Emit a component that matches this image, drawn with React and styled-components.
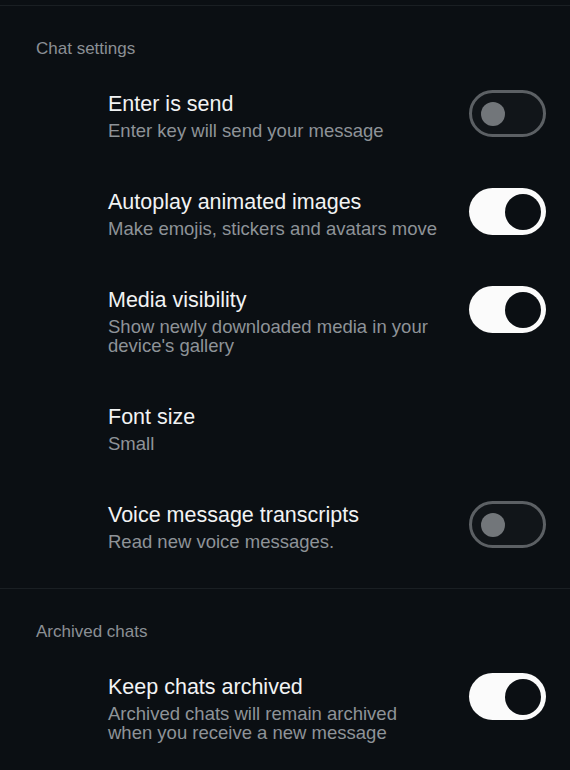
import React from "react";
import styled, { createGlobalStyle } from "styled-components";

const GlobalStyle = createGlobalStyle`
  html, body {
    margin: 0;
    padding: 0;
    background: #0b0f13;
  }
  body {
    font-family: "Liberation Sans", Arial, sans-serif;
    -webkit-font-smoothing: antialiased;
  }
`;

const sections = [
  {
    title: "Chat settings",
    items: [
      { title: "Enter is send", sub: ["Enter key will send your message"], toggle: false },
      { title: "Autoplay animated images", sub: ["Make emojis, stickers and avatars move"], toggle: true },
      {
        title: "Media visibility",
        sub: ["Show newly downloaded media in your", "device's gallery"],
        toggle: true
      },
      { title: "Font size", sub: ["Small"] },
      { title: "Voice message transcripts", sub: ["Read new voice messages."], toggle: false }
    ]
  },
  {
    title: "Archived chats",
    items: [
      {
        title: "Keep chats archived",
        sub: ["Archived chats will remain archived", "when you receive a new message"],
        toggle: true
      }
    ]
  }
];

const Toggle = ({ on }) => (
  <Track on={on ? 1 : 0}>
    <Knob on={on ? 1 : 0} />
  </Track>
);

const App = () => (
  <Page>
    <GlobalStyle />
    {sections.map(section => (
      <Section key={section.title}>
        <SectionTitle>{section.title}</SectionTitle>
        {section.items.map(item => (
          <Row key={item.title}>
            <Texts>
              <ItemTitle>{item.title}</ItemTitle>
              <ItemSub>
                {item.sub.map(line => (
                  <div key={line}>{line}</div>
                ))}
              </ItemSub>
            </Texts>
            {item.toggle !== undefined && <Toggle on={item.toggle} />}
          </Row>
        ))}
      </Section>
    ))}
  </Page>
);

const Page = styled.div`
  background: #0b0f13;
  min-height: 770px;
  padding-top: 5px;
  box-sizing: border-box;
`;

const Section = styled.section`
  border-top: 1px solid #1a1f23;
  padding: 33px 0 12px;
`;

const SectionTitle = styled.div`
  padding-left: 36px;
  font-size: 17px;
  line-height: 20px;
  color: #8b9095;
  margin-bottom: 8px;
`;

const Row = styled.div`
  display: flex;
  align-items: flex-start;
  padding: 25px 24px 25px 108px;
`;

const Texts = styled.div`
  flex: 1;
  display: flex;
  flex-direction: column;
  gap: 5px;
`;

const ItemTitle = styled.div`
  font-size: 21.5px;
  line-height: 24px;
  color: #f2f3f4;
`;

const ItemSub = styled.div`
  font-size: 18.5px;
  line-height: 19px;
  color: #8e9398;
`;

const Track = styled.div`
  width: 77px;
  height: 47px;
  box-sizing: border-box;
  border-radius: 24px;
  display: flex;
  align-items: center;
  justify-content: ${p => (p.on ? "flex-end" : "flex-start")};
  padding: ${p => (p.on ? "0 5px" : "0 9px")};
  background: ${p => (p.on ? "#fbfbfb" : "#111519")};
  border: ${p => (p.on ? "none" : "3px solid #5c6064")};
  margin: -2px 0 -2px;
  flex-shrink: 0;
`;

const Knob = styled.div`
  width: ${p => (p.on ? "36px" : "24px")};
  height: ${p => (p.on ? "36px" : "24px")};
  border-radius: 50%;
  background: ${p => (p.on ? "#0b0f13" : "#72767a")};
`;

export default App;
